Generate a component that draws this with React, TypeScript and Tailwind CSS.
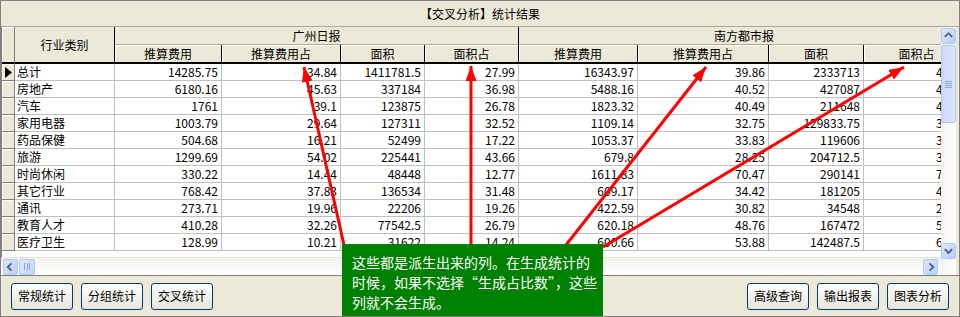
import React from "react";

type Col = { w: string; label: string };

const GZ: Col[] = [
  { w: "w-[107px]", label: "推算费用" },
  { w: "w-[119px]", label: "推算费用占" },
  { w: "w-[84px]", label: "面积" },
  { w: "w-[94px]", label: "面积占" },
];

const NF: Col[] = [
  { w: "w-[119px]", label: "推算费用" },
  { w: "w-[131px]", label: "推算费用占" },
  { w: "w-[95px]", label: "面积" },
  { w: "w-[106px]", label: "面积占" },
];

const ROWS: [string, string[]][] = [
  ["总计", ["14285.75", "34.84", "1411781.5", "27.99", "16343.97", "39.86", "2333713", "40.26"]],
  ["房地产", ["6180.16", "45.63", "337184", "36.98", "5488.16", "40.52", "427087", "47.02"]],
  ["汽车", ["1761", "39.1", "123875", "26.78", "1823.32", "40.49", "211648", "43.98"]],
  ["家用电器", ["1003.79", "29.64", "127311", "32.52", "1109.14", "32.75", "129833.75", "33.48"]],
  ["药品保健", ["504.68", "16.21", "52499", "17.22", "1053.37", "33.83", "119606", "38.45"]],
  ["旅游", ["1299.69", "54.02", "225441", "43.66", "679.8", "28.25", "204712.5", "39.67"]],
  ["时尚休闲", ["330.22", "14.44", "48448", "12.77", "1611.83", "70.47", "290141", "76.42"]],
  ["其它行业", ["768.42", "37.83", "136534", "31.48", "609.17", "34.42", "181205", "41.79"]],
  ["通讯", ["273.71", "19.96", "22206", "19.26", "422.59", "30.82", "34548", "29.97"]],
  ["教育人才", ["410.28", "32.26", "77542.5", "26.79", "620.18", "48.76", "167472", "58.03"]],
  ["医疗卫生", ["128.99", "10.21", "31622", "14.24", "600.66", "53.88", "142487.5", "64.39"]],
];

const ALL = [...GZ, ...NF];

function HeaderGroup({ title, cols, w }: { title: string; cols: Col[]; w: string }) {
  return (
    <div className={`flex shrink-0 flex-col ${w}`}>
      <div className="flex h-[18px] items-center justify-center border-r border-b border-r-black border-b-[#aca899] leading-none">
        {title}
      </div>
      <div className="flex h-[19px]">
        {cols.map((c) => (
          <div
            key={c.label}
            className={`${c.w} flex shrink-0 items-center justify-center border-r border-b-2 border-r-black border-b-black leading-none shadow-[inset_1px_1px_0_#fff]`}
          >
            {c.label}
          </div>
        ))}
      </div>
    </div>
  );
}

function ScrollBtn({ dir }: { dir: "up" | "down" | "left" | "right" }) {
  const d = {
    up: "M3 8 L7 4 L11 8",
    down: "M3 5 L7 9 L11 5",
    left: "M8 3 L4 7 L8 11",
    right: "M6 3 L10 7 L6 11",
  }[dir];
  return (
    <div className="flex h-[16px] w-[15px] shrink-0 items-center justify-center rounded-[2px] border border-[#b4c8f6] bg-gradient-to-br from-[#dfe8fd] to-[#b9cdfa]">
      <svg width="14" height="14" viewBox="0 0 14 14">
        <path d={d} fill="none" stroke="#4d6185" strokeWidth="2" />
      </svg>
    </div>
  );
}

function Btn({ label }: { label: string }) {
  return (
    <button
      type="button"
      className="flex h-[27px] w-[62px] items-center justify-center rounded-[3px] border border-[#003c74] bg-gradient-to-b from-white to-[#e6e4dc] text-[12px] text-black"
    >
      {label}
    </button>
  );
}

export default function App() {
  return (
    <div className="relative h-[317px] w-[960px] overflow-hidden border border-[#808080] bg-[#ece9d8] font-['Noto_Sans_CJK_SC',sans-serif] text-[12px] text-black">
      <div className="flex h-[26px] items-center justify-center border-b border-[#aca899]">
        【交叉分析】统计结果
      </div>

      <div className="flex h-[248px]">
        <div className="flex w-[940px] shrink-0 flex-col">
          <div className="h-[230px] overflow-hidden border-l border-[#808080] bg-white">
            <div className="flex w-[1100px] bg-[#ece9d8]">
              <div className="h-[37px] w-[13px] shrink-0 border-r border-b-2 border-r-[#808080] border-b-black shadow-[inset_1px_1px_0_#fff]" />
              <div className="flex h-[37px] w-[100px] shrink-0 items-center justify-center border-r border-b-2 border-r-black border-b-black">
                行业类别
              </div>
              <HeaderGroup title="广州日报" cols={GZ} w="w-[404px]" />
              <HeaderGroup title="南方都市报" cols={NF} w="w-[451px]" />
            </div>
            {ROWS.map(([name, vals], i) => (
              <div key={name} className="flex h-[17px] w-[1100px]">
                <div className="flex w-[13px] shrink-0 items-center justify-center border-r border-b border-[#808080] bg-[#ece9d8] shadow-[inset_1px_1px_0_#fff]">
                  {i === 0 && (
                    <svg width="7" height="11" viewBox="0 0 7 11">
                      <path d="M0 0 L7 5.5 L0 11 Z" fill="#000" />
                    </svg>
                  )}
                </div>
                <div className="w-[100px] shrink-0 border-r border-b border-[#c0c0c0] pl-[2px] leading-[16px]">
                  {name}
                </div>
                {vals.map((v, j) => (
                  <div
                    key={j}
                    className={`${ALL[j].w} shrink-0 border-r border-b border-[#c0c0c0] pr-[3px] text-right leading-[16px]`}
                  >
                    {v}
                  </div>
                ))}
              </div>
            ))}
          </div>
          <div className="flex h-[18px] items-center border-t border-[#e3e1d8] bg-gradient-to-b from-[#f3f2ee] to-white pl-[2px] pr-[3px]">
            <ScrollBtn dir="left" />
            <div className="ml-[1px] flex h-[16px] w-[16px] items-center justify-center rounded-[2px] border border-[#b4c8f6] bg-gradient-to-br from-[#dfe8fd] to-[#c4d4fb]">
              <div className="h-[7px] w-[6px] border-x border-[#8ea4d8] bg-[linear-gradient(90deg,transparent_2px,#8ea4d8_2px,#8ea4d8_3px,transparent_3px)]" />
            </div>
            <div className="flex-1" />
            <ScrollBtn dir="right" />
          </div>
        </div>

        <div className="flex w-[15px] shrink-0 flex-col bg-gradient-to-r from-[#f3f2ee] to-white pt-[1px]">
          <ScrollBtn dir="up" />
          <div className="mt-[1px] flex h-[78px] items-center justify-center rounded-[2px] border border-[#b4c8f6] bg-gradient-to-r from-[#c9d8fc] to-[#dbe5fd]">
            <div className="flex flex-col gap-[1px]">
              <div className="h-px w-[7px] bg-[#8ea4d8]" />
              <div className="h-px w-[7px] bg-[#8ea4d8]" />
              <div className="h-px w-[7px] bg-[#8ea4d8]" />
              <div className="h-px w-[7px] bg-[#8ea4d8]" />
            </div>
          </div>
          <div className="flex-1" />
          <div className="mb-[16px]">
            <ScrollBtn dir="down" />
          </div>
        </div>
      </div>

      <div className="flex h-[41px] items-center justify-between border-t border-[#808080] px-[10px]">
        <div className="flex gap-[8px]">
          <Btn label="常规统计" />
          <Btn label="分组统计" />
          <Btn label="交叉统计" />
        </div>
        <div className="flex gap-[8px]">
          <Btn label="高级查询" />
          <Btn label="输出报表" />
          <Btn label="图表分析" />
        </div>
      </div>

      <svg className="pointer-events-none absolute left-0 top-0" width="960" height="317" viewBox="0 0 960 317">
        <defs>
          <marker id="ah" markerWidth="15" markerHeight="11" refX="15" refY="5.5" orient="auto" markerUnits="userSpaceOnUse">
            <path d="M0 0 L15 5.5 L0 11 Z" fill="#ff0000" />
          </marker>
        </defs>
        <g stroke="#ff0000" strokeWidth="3" markerEnd="url(#ah)">
          <line x1="343" y1="244" x2="303" y2="66" />
          <line x1="470" y1="244" x2="470" y2="65" />
          <line x1="565" y1="244" x2="705" y2="66" />
          <line x1="602" y1="246" x2="903" y2="66" />
        </g>
      </svg>

      <div className="absolute left-[341px] top-[243px] h-[80px] w-[261px] whitespace-nowrap bg-[#008000] pl-[10px] pt-[8px] text-[14px] leading-[20px] text-white">
        这些都是派生出来的列。在生成统计的
        <br />
        时候，如果不选择“生成占比数”，这些
        <br />
        列就不会生成。
      </div>
    </div>
  );
}
